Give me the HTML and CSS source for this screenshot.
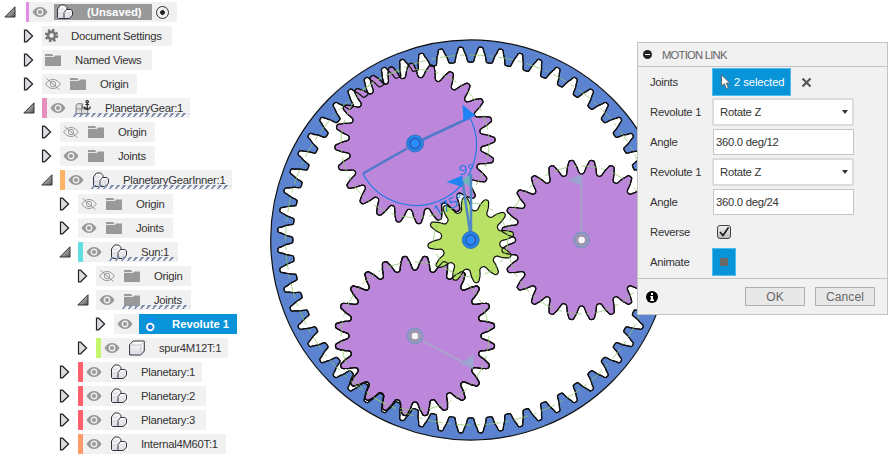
FILE: index.html
```
<!DOCTYPE html>
<html lang="en">
<head>
<meta charset="utf-8">
<title>Motion Link</title>
<link rel="stylesheet" href="styles.css">
</head>
<body>
<svg class="defs" width="0" height="0">
  <defs>
    <linearGradient id="gd" x1="0" y1="0" x2="1" y2="1"><stop offset="0" stop-color="#eee"/><stop offset="1" stop-color="#555"/></linearGradient>
    <linearGradient id="face" x1="0" y1="0" x2="0" y2="1"><stop offset="0" stop-color="#fff"/><stop offset="1" stop-color="#d9dbe2"/></linearGradient>
    <symbol id="closed" viewBox="0 0 12 16"><path d="M1.5 2.2H3.6L9.6 8 3.6 13.8H1.5z" fill="#dcdce0" stroke="#222" stroke-width="1.2"/></symbol>
    <symbol id="open" viewBox="0 0 12 16"><path d="M11 2.8V13H.8z" fill="url(#gd)" stroke="#333" stroke-width="1"/></symbol>
    <symbol id="eye" viewBox="0 0 16 16"><path d="M.5 8C2.5 4.5 5 3 8 3s5.500 1.500 7.500 5C13.500 11.500 11 13 8 13S2.500 11.500.5 8z" fill="#999"/><circle cx="8" cy="8" r="2.700" fill="#999" stroke="#eee" stroke-width="1.400"/></symbol>
    <symbol id="hidden" viewBox="0 0 16 16"><g fill="none" stroke="#999"><path d="M.7 8C2.700 5 5 3.500 8 3.500S13.300 5 15.300 8C13.300 11 11 12.500 8 12.500S2.700 11 .7 8z"/><circle cx="8" cy="8" r="2.700"/><path d="M1.500 2.500l13 11"/></g></symbol>
    <symbol id="folder" viewBox="0 0 16 16"><path d="M0 2h7l1.500 2H0z" fill="#999"/><path d="M0 5h9l1-1.500h6V14H0z" fill="#999"/><path d="M0 4.500h8.500" stroke="#e5e5e5"/></symbol>
    <symbol id="gear" viewBox="0 0 16 16"><circle cx="6.500" cy="7.500" r="5.500" fill="none" stroke="#777" stroke-width="2.500" stroke-dasharray="2.300 2.020"/><circle cx="6.500" cy="7.500" r="3.600" fill="none" stroke="#777" stroke-width="2.800"/></symbol>
    <symbol id="comp" viewBox="0 0 16 16"><g fill="url(#face)" stroke="#34343c" stroke-width="1" stroke-linejoin="round"><path d="M.5 5L3.500 1h4.200L10 3.500V14.500H1.500l-1-1z"/><path d="M7 14.500V8.500L9.500 5.500h4.300l1.700 1.500v4l-3 3.500z"/></g><path d="M1 9.500h5.500M7.500 9h4.500L15 7M12 9.500v4.500M1 5.200h5L8.500 2.500" fill="none" stroke="#cfd1d8" stroke-width=".8"/></symbol>
    <symbol id="anchored" viewBox="0 0 16 17"><path d="M.6 6L2 4h5.500v5l1.500-1h4v6.500H.6z" fill="#dedee3" stroke="#777"/><path d="M1 9.500h12M6.500 5v10" stroke="#888"/><g fill="none" stroke="#222" stroke-width="1.200"><circle cx="12.500" cy="1.900" r="1.300"/><path d="M12.500 3v7M10.500 4.800h4M9 7c.5 2 2 3 3.500 3s3-1 3.500-3"/></g></symbol>
    <symbol id="body" viewBox="0 0 16 16"><path d="M.6 5L4 1h11.300v10l-3.500 4H.6z" fill="url(#face)" stroke="#34343c" stroke-linejoin="round"/><path d="M1 5h10.800L15 1.500M11.800 5v9.500" fill="none" stroke="#c8cad2"/></symbol>
    <symbol id="revolute" viewBox="0 0 16 18"><path d="M4 2l6 2.800-6 2.800z" fill="#1485ff"/><circle cx="5.300" cy="12" r="3.300" fill="#1679dc" stroke="#fff" stroke-width="1.800"/></symbol>
  </defs>
</svg>

<svg class="canvas" id="canvas" width="893" height="459" viewBox="0 0 893 459"></svg>

<main class="workspace">
<nav class="tree">
  <div class="row root"><svg class="arrow"><use href="#open"/></svg><div class="item w151"><i class="bar violet"></i><svg class="ic"><use href="#eye"/></svg><span class="active"><svg class="ic"><use href="#comp"/></svg><b>(Unsaved)</b></span><i class="radio"></i></div></div>
  <div class="row l1"><svg class="arrow"><use href="#closed"/></svg><div class="item w130"><svg class="ic"><use href="#gear"/></svg><span class="label near">Document Settings</span></div></div>
  <div class="row l1"><svg class="arrow"><use href="#closed"/></svg><div class="item w110"><svg class="ic"><use href="#folder"/></svg><span class="label">Named Views</span></div></div>
  <div class="row l1"><svg class="arrow"><use href="#closed"/></svg><div class="item w95"><svg class="ic"><use href="#hidden"/></svg><svg class="ic kind"><use href="#folder"/></svg><span class="label">Origin</span></div></div>
  <div class="row l1"><svg class="arrow"><use href="#open"/></svg><div class="item w148 edited"><i class="bar pink"></i><svg class="ic"><use href="#eye"/></svg><svg class="ic kind"><use href="#anchored"/></svg><span class="label">PlanetaryGear:1</span></div></div>
  <div class="row l2"><svg class="arrow"><use href="#closed"/></svg><div class="item w95"><svg class="ic"><use href="#hidden"/></svg><svg class="ic kind"><use href="#folder"/></svg><span class="label">Origin</span></div></div>
  <div class="row l2"><svg class="arrow"><use href="#closed"/></svg><div class="item w95"><svg class="ic"><use href="#eye"/></svg><svg class="ic kind"><use href="#folder"/></svg><span class="label">Joints</span></div></div>
  <div class="row l2"><svg class="arrow"><use href="#open"/></svg><div class="item w172 edited"><i class="bar orange"></i><svg class="ic"><use href="#eye"/></svg><svg class="ic kind"><use href="#comp"/></svg><span class="label">PlanetaryGearInner:1</span></div></div>
  <div class="row l3"><svg class="arrow"><use href="#closed"/></svg><div class="item w95"><svg class="ic"><use href="#hidden"/></svg><svg class="ic kind"><use href="#folder"/></svg><span class="label">Origin</span></div></div>
  <div class="row l3"><svg class="arrow"><use href="#closed"/></svg><div class="item w95"><svg class="ic"><use href="#eye"/></svg><svg class="ic kind"><use href="#folder"/></svg><span class="label">Joints</span></div></div>
  <div class="row l3"><svg class="arrow"><use href="#open"/></svg><div class="item w100 edited"><i class="bar cyan"></i><svg class="ic"><use href="#eye"/></svg><svg class="ic kind"><use href="#comp"/></svg><span class="label">Sun:1</span></div></div>
  <div class="row l4"><svg class="arrow"><use href="#closed"/></svg><div class="item w95"><svg class="ic"><use href="#hidden"/></svg><svg class="ic kind"><use href="#folder"/></svg><span class="label">Origin</span></div></div>
  <div class="row l4"><svg class="arrow"><use href="#open"/></svg><div class="item w95 edited folder"><svg class="ic"><use href="#eye"/></svg><svg class="ic kind"><use href="#folder"/></svg><span class="label">Joints</span></div></div>
  <div class="row l5"><svg class="arrow"><use href="#closed"/></svg><div class="item w123"><svg class="ic"><use href="#eye"/></svg><span class="selected"><svg class="joint"><use href="#revolute"/></svg><b>Revolute 1</b></span></div></div>
  <div class="row l4"><svg class="arrow"><use href="#closed"/></svg><div class="item w132"><i class="bar lime"></i><svg class="ic"><use href="#eye"/></svg><svg class="ic kind"><use href="#body"/></svg><span class="label">spur4M12T:1</span></div></div>
  <div class="row l3"><svg class="arrow"><use href="#closed"/></svg><div class="item w124"><i class="bar red"></i><svg class="ic"><use href="#eye"/></svg><svg class="ic kind"><use href="#comp"/></svg><span class="label">Planetary:1</span></div></div>
  <div class="row l3"><svg class="arrow"><use href="#closed"/></svg><div class="item w128"><i class="bar red"></i><svg class="ic"><use href="#eye"/></svg><svg class="ic kind"><use href="#comp"/></svg><span class="label">Planetary:2</span></div></div>
  <div class="row l3"><svg class="arrow"><use href="#closed"/></svg><div class="item w128"><i class="bar red"></i><svg class="ic"><use href="#eye"/></svg><svg class="ic kind"><use href="#comp"/></svg><span class="label">Planetary:3</span></div></div>
  <div class="row l3"><svg class="arrow"><use href="#closed"/></svg><div class="item w148"><i class="bar tangerine"></i><svg class="ic"><use href="#eye"/></svg><svg class="ic kind"><use href="#comp"/></svg><span class="label">Internal4M60T:1</span></div></div>
</nav>

<section class="dialog">
  <header><i class="collapse"></i><span>MOTION LINK</span></header>
  <div class="fields">
    <span>Joints</span><div class="line"><div class="picked"><svg width="12" height="16" viewBox="0 0 12 16"><path d="M1.500 1v11l2.800-2.400 2 5 2-.9-2-4.700h3.500z" fill="#fff" stroke="#666"/></svg>2 selected</div><svg class="clear" width="11" height="11" viewBox="0 0 11 11"><path d="M1.500 1.500l8 8M9.500 1.500l-8 8" stroke="#555" stroke-width="2.200"/></svg></div>
    <span>Revolute 1</span><div class="select">Rotate Z<i></i></div>
    <span>Angle</span><div class="input">360.0 deg/12</div>
    <span>Revolute 1</span><div class="select">Rotate Z<i></i></div>
    <span>Angle</span><div class="input">360.0 deg/24</div>
    <span>Reverse</span><div class="check"><svg width="12" height="12" viewBox="0 0 12 12"><path d="M2 6l3 3.500L10.500 1.500" fill="none" stroke="#111" stroke-width="1.500"/></svg></div>
    <span>Animate</span><div class="stop"><i></i></div>
  </div>
  <footer><svg width="12" height="12" viewBox="0 0 12 12"><circle cx="6" cy="6" r="6"/><path d="M5 2h2v2H5zM4.300 5H7v3.500h1V10H4.300V8.500H5v-2h-.7z" fill="#fff"/></svg><div class="btn">OK</div><div class="btn">Cancel</div></footer>
</section>
</main>
<script src="gears.js"></script>
</body>
</html>
```
FILE: styles.css
```
* { box-sizing: border-box; }
body { margin: 0; width: 893px; height: 459px; overflow: hidden; background: #fff; font: 11.3px/20px "Liberation Sans", Arial, sans-serif; letter-spacing: -.28px; color: #333; }
.defs { position: absolute; }
.canvas { position: absolute; left: 0; top: 0; }
.workspace { position: relative; display: flex; justify-content: space-between; align-items: flex-start; padding-right: 5px; }

.tree { width: 240px; }
.tree b { letter-spacing: 0; }
.row { display: flex; align-items: center; height: 24px; padding-left: 23px; }
.row.root { padding-left: 4px; }
.row.l2 { padding-left: 41px; }
.row.l3 { padding-left: 59px; }
.row.l4 { padding-left: 77px; }
.row.l5 { padding-left: 95px; }
.arrow { width: 12px; height: 16px; flex: none; margin-right: 7px; }
.root .arrow { margin-right: 10px; }
.item { position: relative; display: flex; align-items: center; height: 20px; padding-left: 3px; background: #f1f1f1; white-space: nowrap; }
.item:has(.bar) { padding-left: 0; }
.bar { flex: none; width: 5px; height: 20px; margin-right: 3px; }
.root .bar { width: 3px; }
.ic { width: 16px; height: 16px; flex: none; }
.kind { margin-left: 9px; }
.label { margin-left: 14px; }
.label.near { margin-left: 10px; }
.violet { background: #e18de6; }
.pink { background: #e68fbe; }
.orange { background: #ffb366; }
.cyan { background: #62dde2; }
.lime { background: #c5f56c; }
.red { background: #ff6070; }
.tangerine { background: #ff9b66; }
.w95 { width: 95px; } .w100 { width: 100px; } .w110 { width: 110px; }
.w123 { width: 123px; } .w124 { width: 124px; } .w128 { width: 128px; }
.w130 { width: 130px; } .w132 { width: 132px; } .w148 { width: 148px; }
.w151 { width: 151px; } .w172 { width: 172px; }
.active { display: flex; align-items: center; width: 98px; height: 16px; margin-left: 6px; padding-left: 3px; background: #999; color: #fff; }
.active b { margin-left: 14px; }
.radio { width: 13px; height: 13px; margin-left: 4px; border: 1px solid #333; border-radius: 50%; background: radial-gradient(circle, #222 2px, transparent 2.7px); }
.edited::after { content: ""; position: absolute; left: 32px; right: 2px; bottom: 1px; height: 4px; background: repeating-linear-gradient(90deg, #8292b3 0 2.600px, transparent 2.600px 6px); transform: skewX(-38deg); }
.edited.folder::after { left: 27px; }
.selected { display: flex; align-items: center; width: 98px; height: 20px; margin-left: 6px; padding-left: 6px; background: #0994d9; color: #fff; }
.joint { width: 16px; height: 18px; }
.selected b { margin-left: 11px; }

.dialog { width: 251px; height: 273px; margin-top: 42px; background: #f1f1f1; border: 1px solid #c3c3c3; }
.dialog header { display: flex; align-items: center; height: 24px; padding-left: 5px; border-bottom: 1px solid #c3c3c3; color: #666; letter-spacing: -.8px; }
.collapse { width: 9px; height: 9px; margin-right: 10px; border-radius: 50%; background: linear-gradient(#fff, #fff) center / 5px 1px no-repeat #222; }
.fields { display: grid; grid-template-columns: 62px 142px; grid-auto-rows: 30px; align-items: center; padding-left: 12px; height: 211px; }
.line { display: flex; align-items: center; }
.picked { display: flex; align-items: center; gap: 2px; width: 79px; height: 28px; padding-left: 7px; background: #0994d9; border: 1px solid #4fbcf0; color: #fff; letter-spacing: -.1px; }
.clear { margin-left: 10px; }
.select, .input { display: flex; align-items: center; background: #fff; color: #333; }
.select { justify-content: space-between; height: 28px; padding: 0 4px 0 6px; border: 2px solid #dcdcdc; border-radius: 2px; }
.select i { border: 3px solid transparent; border-top: 4px solid #333; border-bottom: 0; }
.input { width: 141px; height: 26px; margin-left: 1px; padding-left: 2px; border: 1px solid #c5c5c5; }
.check { display: flex; align-items: center; justify-content: center; width: 14px; height: 14px; margin-left: 5px; border: 1px solid #444; border-radius: 3px; background: linear-gradient(#eee, #bbb); }
.stop { display: flex; align-items: center; justify-content: center; width: 24px; height: 28px; background: #0994d9; border: 1px solid #4fbcf0; }
.stop i { width: 8px; height: 8px; background: #6a6a6a; }
.dialog footer { display: flex; align-items: center; height: 36px; padding: 0 12px 0 8px; border-top: 1px solid #c3c3c3; }
.dialog footer svg { margin-right: auto; }
.btn { width: 60px; height: 19px; margin-left: 10px; border: 1px solid #b0b0b0; background: #e8e8e8; color: #666; text-align: center; font-size: 12px; line-height: 18px; letter-spacing: .1px; }

.outline { stroke: #111; stroke-width: 1.200; stroke-linejoin: round; }
.ring { fill: #5b83cf; fill-rule: evenodd; }
.planet { fill: #bc87da; }
.sun { fill: #b8e165; }
.outline.edge { fill: none; }
.pitch { fill: none; stroke: #8fc86a; stroke-opacity: .75; stroke-width: 1; stroke-dasharray: 15 5 4 5; }
.angle { fill: #2379e8; font: 15px "Open Sans", sans-serif; letter-spacing: 0; }
```
FILE: gears.js
```
const SUN = [470.7, 240];
const RIGHT = [581.6, 240];
const UPPER = [415, 143.5];
const LOWER = [415, 336];

// Half-profile of a tooth: [radius, distance from the tooth's axis]
const PLANET = [[66.3, 7.3], [68, 6.1], [70.5, 5.5], [74, 4.6], [77, 3.3], [79, 2.5], [80, 1.4]];
const PINION = [[29.7, 6.2], [31.5, 4.9], [34, 4.7], [37, 4.2], [40, 3.2], [42, 2.3], [43, 1.1]];
const SPACE = [[178, 7.2], [179, 6.3], [182, 5.6], [185, 4.9], [189, 3.3], [192, 2.4], [193, 1.2]];

function outline([cx, cy], teeth, phase, profile) {
  const pts = [];
  for (let k = 0; k < teeth; k++) {
    const a = (phase + k * 360 / teeth) * Math.PI / 180;
    const add = (r, off) => pts.push([cx + r * Math.cos(a + off / r), cy + r * Math.sin(a + off / r)]);
    profile.forEach(([r, w]) => add(r, -w));
    [...profile].reverse().forEach(([r, w]) => add(r, w));
  }
  const n = pts.length;
  const f = p => p.map(v => v.toFixed(2)).join(' ');
  let d = 'M' + f(pts[0]);
  for (let i = 0; i < n; i++) {
    const p = j => pts[(i + j + n) % n];
    const c1 = [0, 1].map(x => p(0)[x] + (p(1)[x] - p(-1)[x]) / 6);
    const c2 = [0, 1].map(x => p(1)[x] - (p(2)[x] - p(0)[x]) / 6);
    d += `C${f(c1)} ${f(c2)} ${f(p(1))}`;
  }
  return d + 'Z';
}

const path = (d, cls) => `<path class="outline ${cls}" d="${d}"/>`;
const pitch = ([x, y], r) => `<circle class="pitch" cx="${x}" cy="${y}" r="${r}"/>`;
const hub = ([x, y]) => `<circle cx="${x}" cy="${y}" r="8.500" fill="#2484ef" stroke="#3e72b5" stroke-width="1"/><circle cx="${x}" cy="${y}" r="5" fill="#2b8cff" stroke="#2a5fa8" stroke-width="1.500"/>`;
const idleHub = ([x, y]) => `<circle cx="${x}" cy="${y}" r="7.500" fill="#a39ab5" stroke="#8296c5" stroke-width="2"/><circle cx="${x}" cy="${y}" r="4" fill="#f7f5fa" stroke="#8e879b" stroke-width="1"/>`;

const space = outline(SUN, 60, 3, SPACE);
const rim = 'M270.700 240a200 200 0 1 0 400 0a200 200 0 1 0-400 0Z';
const upper = outline(UPPER, 24, 12.2, PLANET);
const lower = outline(LOWER, 24, 7.5, PLANET);
const right = outline(RIGHT, 24, 7.5, PLANET);

document.getElementById('canvas').innerHTML =
  path(lower, 'planet') + path(rim + space, 'ring') + path(lower, 'edge') +
  path(upper, 'planet') + path(space, 'edge') + path(right, 'planet') +
  path(outline(SUN, 12, 22, PINION), 'sun') + path(upper, 'edge') + path(lower, 'edge') + path(right, 'edge') +
  [UPPER, LOWER, RIGHT].map(c => pitch(c, 74)).join('') + pitch(SUN, 37) + pitch(SUN, 185) +
  `<path d="M581.500 232V178M423 341L466 364" stroke="#a5a8c8" stroke-width="1.500"/>
   <path d="M581.500 174.500V185.500L567.500 180ZM474 354L473 369 461 363Z" fill="#9ba3cf"/>
   <path d="M363 174A60 60 0 1 0 469 116" fill="none" stroke="#2379e8" stroke-width="1.200"/>
   <path d="M363 173.500L407 148.500M423 139.500L470 117.500" stroke="#5078cc" stroke-width="2.500"/>
   <path d="M462.500 104.500L475.500 115.500 463.500 121Z" fill="#2184f5"/>
   <path d="M471 174V187L460 181Z" fill="#72b4bd"/>
   <path d="M471 174V232M462.500 181L470 232" stroke="#5088c5" stroke-width="2.500"/>
   <path d="M446.500 182L462.500 175.500V187Z" fill="#2184f5"/>
   <text class="angle" x="458.500" y="175">9°</text>
   <text class="angle" transform="translate(436.500 217) rotate(-28)">175°</text>` +
  hub(UPPER) + hub(SUN) + idleHub(LOWER) + idleHub(RIGHT);
```
